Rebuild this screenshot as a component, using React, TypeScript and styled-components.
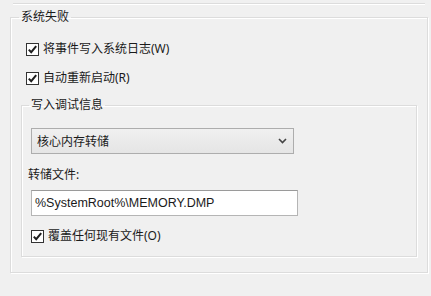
import * as React from 'react';
import styled, { createGlobalStyle } from 'styled-components';

const GlobalStyle = createGlobalStyle`
  html, body {
    margin: 0;
    padding: 0;
    background: #f0f0f0;
  }
  body {
    width: 431px;
    height: 296px;
    overflow: hidden;
    font-family: 'Noto Sans', 'Noto Sans CJK SC', sans-serif;
    font-size: 12px;
    color: #1a1a1a;
  }
`;

const Page = styled.div`
  display: flex;
  flex-direction: column;
  width: 431px;
  height: 296px;
`;

// bottom edge of the group box above this one
const PrevEdge = styled.div`
  height: 3px;
  margin: 0 6px 0 13px;
  border-bottom: 1px solid #dcdcdc;
  box-shadow: 0 1px 0 #fff;
`;

const Group = styled.fieldset<{ $inner?: boolean }>`
  box-sizing: border-box;
  min-width: 0;
  margin: ${(p) => (p.$inner ? '11px 0 0 0' : '5px 0 0 10px')};
  width: ${(p) => (p.$inner ? 'auto' : '418px')};
  padding: ${(p) => (p.$inner ? '15px 10px 12px 9px' : '16px 10px 15px 10px')};
  border: 1px solid #dcdcdc;
  box-shadow: inset 1px 1px 0 #fff, 1px 1px 0 #fff;
`;

const Legend = styled.legend`
  padding: 0 2px;
  margin-left: -2px;
  line-height: 16px;
  font-size: 12px;
  color: #1a1a1a;
`;

const CheckRow = styled.label<{ $indent: number; $gap: number }>`
  display: flex;
  align-items: center;
  gap: 4px;
  height: 16px;
  line-height: 16px;
  padding-left: ${(p) => p.$indent}px;
  margin-top: ${(p) => p.$gap}px;
  white-space: nowrap;
`;

const Box = styled.span`
  box-sizing: border-box;
  width: 13px;
  height: 13px;
  border: 1px solid #333;
  background: #fff;
  display: flex;
  align-items: center;
  justify-content: center;
  flex: none;
`;

const Combo = styled.div`
  box-sizing: border-box;
  width: 263px;
  height: 26px;
  display: flex;
  align-items: center;
  justify-content: space-between;
  padding: 0 6px 0 5px;
  border: 1px solid #adadad;
  background: linear-gradient(#f0f0f0, #e5e5e5);
`;

const FieldLabel = styled.div`
  margin: 13px 0 0 -3px;
  line-height: 16px;
`;

const TextBox = styled.div`
  box-sizing: border-box;
  width: 267px;
  height: 26px;
  margin-top: 7px;
  display: flex;
  align-items: center;
  padding-left: 3px;
  border: 1px solid #b5b5b5;
  border-top-color: #9a9a9a;
  background: #fff;
  font-family: 'Liberation Sans', Arial, sans-serif;
  font-size: 12.5px;
  color: #1a1a1a;
`;

const Check = () => (
  <Box>
    <svg width="11" height="11" viewBox="0 0 11 11">
      <path d="M1.8 5.6 L4.2 8.2 L9.2 2.2" fill="none" stroke="#1e1e1e" strokeWidth="2" />
    </svg>
  </Box>
);

const Chevron = () => (
  <svg width="9" height="6" viewBox="0 0 9 6">
    <path d="M1 1 L4.5 4.5 L8 1" fill="none" stroke="#444" strokeWidth="1.6" />
  </svg>
);

export default function App() {
  return (
    <Page>
      <GlobalStyle />
      <PrevEdge />
      <Group>
        <Legend>系统失败</Legend>
        <CheckRow $indent={5} $gap={0}>
          <Check />
          将事件写入系统日志(W)
        </CheckRow>
        <CheckRow $indent={5} $gap={13}>
          <Check />
          自动重新启动(R)
        </CheckRow>
        <Group $inner>
          <Legend>写入调试信息</Legend>
          <Combo>
            <span>核心内存转储</span>
            <Chevron />
          </Combo>
          <FieldLabel>转储文件:</FieldLabel>
          <TextBox>%SystemRoot%\MEMORY.DMP</TextBox>
          <CheckRow $indent={0} $gap={12}>
            <Check />
            覆盖任何现有文件(O)
          </CheckRow>
        </Group>
      </Group>
    </Page>
  );
}
